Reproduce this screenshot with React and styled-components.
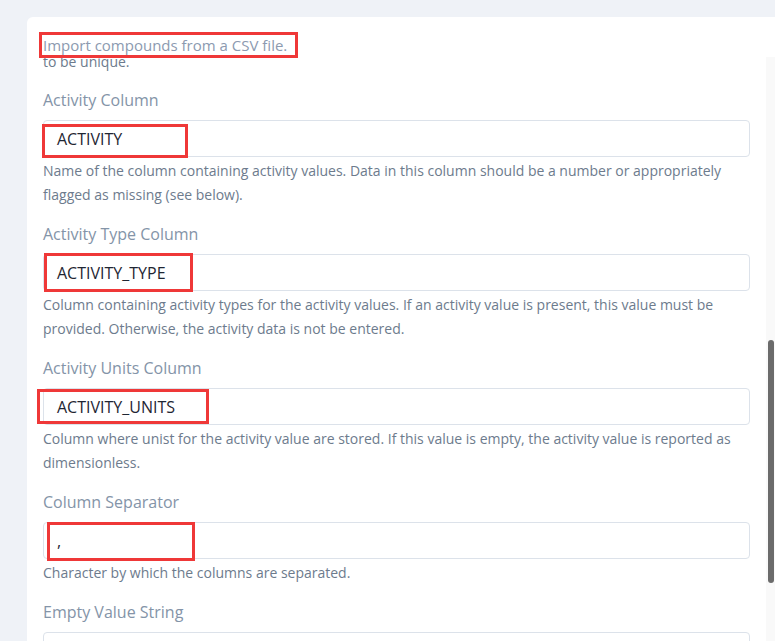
import React from "react";
import styled, { createGlobalStyle } from "styled-components";

const Global = createGlobalStyle`
  html, body { margin: 0; padding: 0; }
  body {
    background: #eff2f7;
    font-family: "Open Sans", "Noto Sans", sans-serif;
    overflow: hidden;
  }
`;

const Viewport = styled.div`
  display: flex;
  height: 641px;
  width: 775px;
  overflow: hidden;
`;

const Content = styled.div`
  flex: 1;
  padding: 17px 0 0 27px;
  min-width: 0;
`;

const Card = styled.div`
  position: relative;
  background: #ffffff;
  border-radius: 6px 0 0 0;
  padding: 33px 16px 0 16px;
  height: 700px;
`;

const Help = styled.p`
  margin: 0;
  font-size: 14px;
  line-height: 24px;
  color: #6d7b8d;
`;

const Field = styled.div`
  display: flex;
  flex-direction: column;
  margin-top: 14px;
  & + & {
    margin-top: 15px;
  }
`;

const Label = styled.label`
  font-size: 16px;
  line-height: 24px;
  color: #8494a8;
  margin-bottom: 8px;
`;

const Input = styled.div`
  box-sizing: border-box;
  height: 37px;
  border: 1px solid #dce2ea;
  border-radius: 4px;
  padding: 0 13px;
  display: flex;
  align-items: center;
  font-size: 16px;
  color: #1f2633;
  margin-bottom: 2px;
`;

const Track = styled.div`
  width: 9px;
  margin-top: 17px;
  background: linear-gradient(#ffffff 40px, #f9f9f9 40px);
  display: flex;
  flex-direction: column;
`;

const Thumb = styled.div`
  margin-top: ${(p) => p.$top}px;
  height: ${(p) => p.$height}px;
  width: 6px;
  margin-left: 2px;
  border-radius: 3px;
  background: #6b6b6b;
`;

const Callout = styled.div`
  position: absolute;
  box-sizing: border-box;
  left: ${(p) => p.$x}px;
  top: ${(p) => p.$y}px;
  width: ${(p) => p.$w}px;
  height: ${(p) => p.$h}px;
  border: 3px solid #ef3838;
  background: ${(p) => (p.$filled ? "#ffffff" : "transparent")};
  font-size: 15px;
  color: #8c9ab0;
  line-height: 20px;
  padding-left: 1px;
  white-space: nowrap;
`;

const fields = [
  {
    label: "Activity Column",
    value: "ACTIVITY",
    help: "Name of the column containing activity values. Data in this column should be a number or appropriately flagged as missing (see below).",
  },
  {
    label: "Activity Type Column",
    value: "ACTIVITY_TYPE",
    help: "Column containing activity types for the activity values. If an activity value is present, this value must be provided. Otherwise, the activity data is not be entered.",
  },
  {
    label: "Activity Units Column",
    value: "ACTIVITY_UNITS",
    help: "Column where unist for the activity value are stored. If this value is empty, the activity value is reported as dimensionless.",
  },
  {
    label: "Column Separator",
    value: ",",
    help: "Character by which the columns are separated.",
  },
  { label: "Empty Value String", value: "", help: "" },
];

const callouts = [
  { x: 12, y: 15, w: 259, h: 26, filled: true, text: "Import compounds from a CSV file." },
  { x: 15, y: 107, w: 146, h: 34 },
  { x: 17, y: 236, w: 149, h: 39 },
  { x: 10, y: 372, w: 172, h: 35 },
  { x: 20, y: 505, w: 148, h: 39 },
];

export default function App() {
  return (
    <>
      <Global />
      <Viewport>
        <Content>
          <Card>
            <Help>to be unique.</Help>
            {fields.map((f) => (
              <Field key={f.label}>
                <Label>{f.label}</Label>
                <Input>{f.value}</Input>
                {f.help && <Help>{f.help}</Help>}
              </Field>
            ))}
            {callouts.map((c, i) => (
              <Callout
                key={i}
                $filled={c.filled}
                $x={c.x}
                $y={c.y}
                $w={c.w}
                $h={c.h}
              >
                {c.text}
              </Callout>
            ))}
          </Card>
        </Content>
        <Track>
          <Thumb $top={323} $height={243} />
        </Track>
      </Viewport>
    </>
  );
}
